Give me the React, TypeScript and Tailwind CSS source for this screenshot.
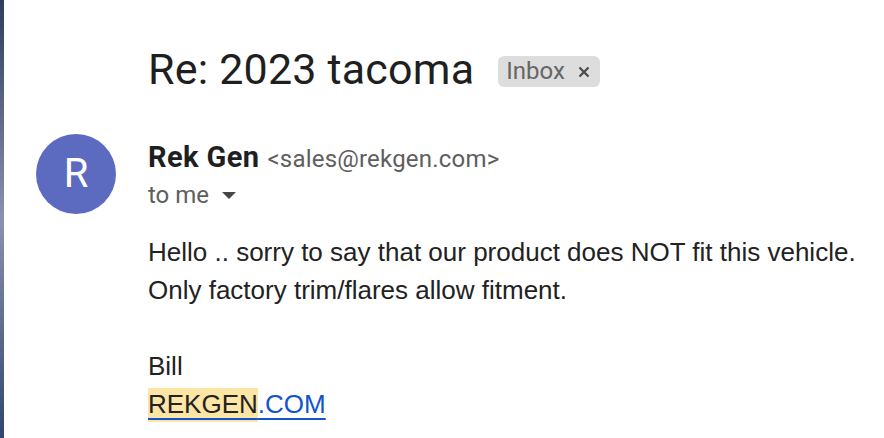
import React from "react";

export default function App() {
  return (
    <div className="w-[884px] h-[438px] bg-white flex overflow-hidden">
      <div className="w-[4px] h-full shrink-0 bg-gradient-to-b from-[#2f3d5e] via-[#8a93ad] to-[#33456e]" />
      <div className="flex-1 flex flex-col">
        <div className="flex items-center pl-[144px] mt-[45px] h-[48px]">
          <h1 className="font-['Roboto',sans-serif] text-[43px] leading-[48px] text-[#1f1f1f] font-normal whitespace-nowrap tracking-[0.2px]">
            Re: 2023 tacoma
          </h1>
          <span className="ml-[24px] mt-[4px] flex items-center h-[31px] rounded-[6px] bg-[#dddddd] pl-[8px] pr-[10px] font-['Roboto',sans-serif] text-[24px] leading-none text-[#666666]">
            Inbox
            <svg viewBox="0 0 12 12" className="w-[12px] h-[12px] ml-[13px] mt-[2px]" fill="none" stroke="#4a4a4a" strokeWidth="2.2">
              <path d="M1.5 1.5l9 9M10.5 1.5l-9 9" />
            </svg>
          </span>
        </div>
        <div className="flex items-start pl-[32px] mt-[41px]">
          <div className="w-[80px] h-[80px] rounded-full bg-[#5c6bc0] flex items-center justify-center shrink-0">
            <span className="font-['Roboto',sans-serif] text-[40px] text-white leading-none">R</span>
          </div>
          <div className="ml-[32px] pt-[7px] flex flex-col">
            <div className="h-[32px] leading-[32px] font-['Roboto',sans-serif] whitespace-nowrap">
              <span className="text-[29px] font-bold text-[#1f1f1f] tracking-[0.4px]">Rek Gen</span>
              <span className="text-[24px] text-[#5e5e5e] ml-[8px] tracking-[0.2px]">&lt;sales@rekgen.com&gt;</span>
            </div>
            <div className="mt-[6px] h-[32px] flex items-center font-['Roboto',sans-serif] text-[24px] text-[#5e5e5e]">
              to me
              <svg viewBox="0 0 10 5" className="w-[14px] h-[7px] ml-[13px] mt-[1px]">
                <path d="M0 0h10L5 5z" fill="#444746" />
              </svg>
            </div>
            <div className="mt-[22px] font-['Liberation_Sans',Arial,sans-serif] text-[26px] leading-[38px] text-[#222222] whitespace-nowrap">
              <div>Hello .. sorry to say that our product does NOT fit this vehicle.</div>
              <div>Only factory trim/flares allow fitment.</div>
              <div className="h-[38px]" />
              <div>Bill</div>
              <div>
                <a className="text-[#1155cc] underline decoration-[#1155cc] decoration-2 underline-offset-[5px]">
                  <span className="bg-[#fce5a5] text-[#222222] pb-[3px] pt-[1px]">REKGEN</span>.COM
                </a>
              </div>
            </div>
          </div>
        </div>
      </div>
    </div>
  );
}
